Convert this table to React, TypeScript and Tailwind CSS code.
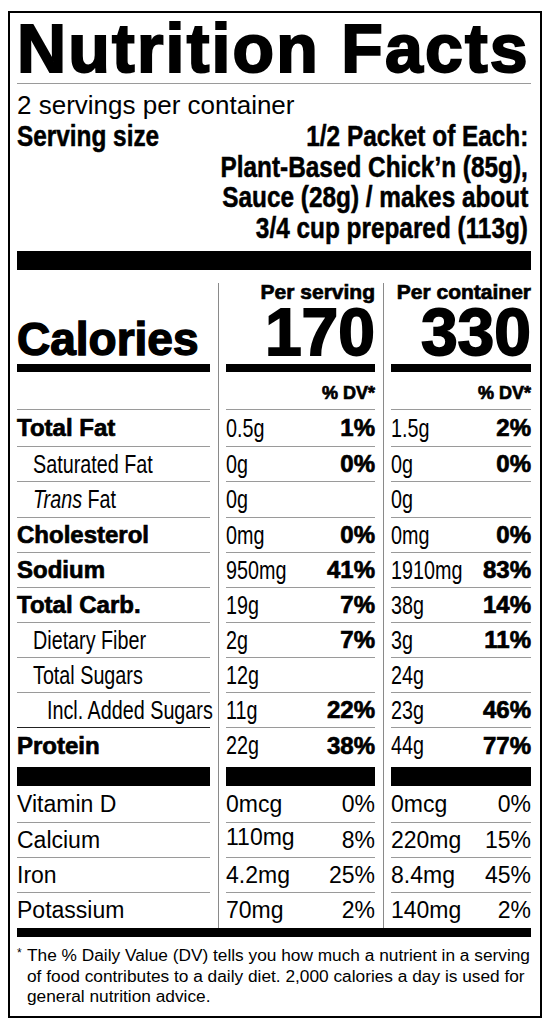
import React from 'react';

const sans = "font-['Liberation_Sans',Arial,sans-serif]";
const heavy = "font-['Liberation_Sans',Arial,sans-serif] font-bold [-webkit-text-stroke:0.7px_#000]";
const boldSans = "font-['Liberation_Sans',Arial,sans-serif] font-bold [-webkit-text-stroke:0.5px_#000]";

// no condensed face installed, so squeeze the regular one horizontally
const N: React.FC<{ children: React.ReactNode; right?: boolean; wide?: boolean; className?: string }> = ({
  children,
  right,
  wide,
  className = '',
}) => (
  <span
    className={`inline-block whitespace-nowrap ${wide ? 'scale-x-[0.84]' : 'scale-x-[0.79]'} ${
      right ? 'origin-right' : 'origin-left'
    } ${className}`}
  >
    {children}
  </span>
);

interface ColsProps {
  a: React.ReactNode;
  b: React.ReactNode;
  c: React.ReactNode;
  aCls?: string;
  bCls?: string;
  cCls?: string;
}

// three columns with the grey dividers running between them
const Cols: React.FC<ColsProps> = ({ a, b, c, aCls = '', bCls = '', cCls = '' }) => (
  <div className="flex">
    <div className={`w-[193px] shrink-0 ${aCls}`}>{a}</div>
    <div className="ml-[8px] flex border-l border-[#8a8a8a] pl-[7px]">
      <div className={`w-[149px] ${bCls}`}>{b}</div>
    </div>
    <div className="ml-[8px] flex border-l border-[#8a8a8a] pl-[7px]">
      <div className={`w-[140px] ${cCls}`}>{c}</div>
    </div>
  </div>
);

interface Nutrient {
  label: React.ReactNode;
  kind: 'bold' | 'sub' | 'subsub';
  s: string;
  sd?: string;
  c: string;
  cd?: string;
  h: string;
  lineIndent?: boolean;
  darkLine?: boolean;
  noLine?: boolean;
}

const nutrients: Nutrient[] = [
  { label: 'Total Fat', kind: 'bold', s: '0.5g', sd: '1%', c: '1.5g', cd: '2%', h: 'h-[37px]' },
  { label: 'Saturated Fat', kind: 'sub', s: '0g', sd: '0%', c: '0g', cd: '0%', h: 'h-[35px]' },
  { label: <><i>Trans</i> Fat</>, kind: 'sub', s: '0g', c: '0g', h: 'h-[36px]' },
  { label: 'Cholesterol', kind: 'bold', s: '0mg', sd: '0%', c: '0mg', cd: '0%', h: 'h-[35px]' },
  { label: 'Sodium', kind: 'bold', s: '950mg', sd: '41%', c: '1910mg', cd: '83%', h: 'h-[35px]' },
  { label: 'Total Carb.', kind: 'bold', s: '19g', sd: '7%', c: '38g', cd: '14%', h: 'h-[35px]' },
  { label: 'Dietary Fiber', kind: 'sub', s: '2g', sd: '7%', c: '3g', cd: '11%', h: 'h-[35px]' },
  { label: 'Total Sugars', kind: 'sub', s: '12g', c: '24g', h: 'h-[35px]', lineIndent: true },
  { label: 'Incl. Added Sugars', kind: 'subsub', s: '11g', sd: '22%', c: '23g', cd: '46%', h: 'h-[35px]', darkLine: true },
  { label: 'Protein', kind: 'bold', s: '22g', sd: '38%', c: '44g', cd: '77%', h: 'h-[35px]', noLine: true },
];

const vitamins = [
  { label: 'Vitamin D', s: '0mcg', sd: '0%', c: '0mcg', cd: '0%', h: 'h-[37px]' },
  { label: 'Calcium', s: '110mg', sd: '8%', c: '220mg', cd: '15%', h: 'h-[35px]', lift: true },
  { label: 'Iron', s: '4.2mg', sd: '25%', c: '8.4mg', cd: '45%', h: 'h-[35px]' },
  { label: 'Potassium', s: '70mg', sd: '2%', c: '140mg', cd: '2%', h: 'h-[35px]', noLine: true },
];

const line = 'border-b border-[#9a9a9a]';

const App: React.FC = () => {
  return (
    <div className="min-h-[1024px] w-[551px] bg-white pt-[11px] text-black">
      <div className="ml-[8px] w-[534px] border-2 border-black pb-[9px] pl-[7px] pr-[9px]">
        <h1 className={`${heavy} whitespace-nowrap border-b border-[#9a9a9a] text-[68px] leading-[70px] tracking-[2.2px] [-webkit-text-stroke:2px_#000]`}>
          Nutrition Facts
        </h1>

        <p className={`${sans} pt-[7px] text-[26px] leading-[28px]`}>2 servings per container</p>

        <div className={`${boldSans} mt-[2px] flex text-[29px] leading-[30.5px]`}>
          <div className="w-0 whitespace-nowrap">
            <N wide>Serving size</N>
          </div>
          <div className="ml-auto flex flex-col items-end pr-[3px]">
            <N wide right>1/2 Packet of Each:</N>
            <N wide right>Plant-Based Chick’n (85g),</N>
            <N wide right>Sauce (28g) / makes about</N>
            <N wide right>3/4 cup prepared (113g)</N>
          </div>
        </div>

        <div className="mt-[8px] h-[19px] bg-black" />

        <div className="pt-[13px]">
          <Cols
            aCls="flex flex-col justify-end"
            a={
              <>
                <div className={`${heavy} text-[46px] leading-[42px] [-webkit-text-stroke:1.4px_#000]`}>Calories</div>
                <div className="mt-[4px] h-[8px] bg-black" />
              </>
            }
            b={
              <>
                <div className={`${heavy} text-right text-[21px] leading-[18px]`}>Per serving</div>
                <div className={`${heavy} mt-[3px] text-right text-[66px] leading-[56px] [-webkit-text-stroke:1.8px_#000]`}>170</div>
                <div className="mt-[4px] h-[8px] bg-black" />
              </>
            }
            c={
              <>
                <div className={`${heavy} text-right text-[21px] leading-[18px]`}>Per container</div>
                <div className={`${heavy} mt-[3px] text-right text-[66px] leading-[56px] [-webkit-text-stroke:1.8px_#000]`}>330</div>
                <div className="mt-[4px] h-[8px] bg-black" />
              </>
            }
          />
          <Cols
            aCls={`h-[38px] ${line}`}
            bCls={`h-[38px] ${line}`}
            cCls={`h-[38px] ${line}`}
            a={null}
            b={<div className={`${heavy} pt-[11px] text-right text-[18px] leading-[20px]`}>% DV*</div>}
            c={<div className={`${heavy} pt-[11px] text-right text-[18px] leading-[20px]`}>% DV*</div>}
          />

          {nutrients.map((n, i) => {
            const ln = n.noLine ? '' : line;
            const aLine = n.noLine ? '' : n.darkLine ? 'border-b border-[#222]' : line;
            const label =
              n.kind === 'bold' ? (
                <span className={`${heavy} whitespace-nowrap text-[24px] leading-none`}>{n.label}</span>
              ) : (
                <N className={`${sans} text-[25px] leading-none ${n.kind === 'sub' ? 'ml-[16px]' : 'ml-[30px]'} ${n.lineIndent ? '-translate-x-[31px]' : ''}`}>
                  {n.label}
                </N>
              );
            return (
              <Cols
                key={i}
                aCls={`${n.h} ${aLine} ${n.lineIndent ? 'pl-[31px]' : ''} flex items-center`}
                bCls={`${n.h} ${ln} flex items-center justify-between`}
                cCls={`${n.h} ${ln} flex items-center justify-between`}
                a={
                  n.lineIndent ? (
                    <div className={`flex h-full w-full items-center ${line} -mb-px`}>{label}</div>
                  ) : (
                    label
                  )
                }
                b={
                  <>
                    <N className={`${sans} text-[25px] leading-none`}>{n.s}</N>
                    {n.sd && <span className={`${heavy} text-[24px] leading-none`}>{n.sd}</span>}
                  </>
                }
                c={
                  <>
                    <N className={`${sans} text-[25px] leading-none`}>{n.c}</N>
                    {n.cd && <span className={`${heavy} text-[24px] leading-none`}>{n.cd}</span>}
                  </>
                }
              />
            );
          })}

          <Cols
            aCls="pt-[4px]"
            bCls="pt-[4px]"
            cCls="pt-[4px]"
            a={<div className="h-[19px] bg-black" />}
            b={<div className="h-[19px] bg-black" />}
            c={<div className="h-[19px] bg-black" />}
          />

          {vitamins.map((v) => {
            const ln = v.noLine ? '' : line;
            return (
              <Cols
                key={v.label}
                aCls={`${v.h} ${ln} flex items-center`}
                bCls={`${v.h} ${ln} flex items-center justify-between`}
                cCls={`${v.h} ${ln} flex items-center justify-between`}
                a={<span className={`${sans} text-[23px] leading-none`}>{v.label}</span>}
                b={
                  <>
                    <span className={`${sans} text-[23px] leading-none ${v.lift ? '-translate-y-[3px]' : ''}`}>{v.s}</span>
                    <span className={`${sans} text-[23px] leading-none`}>{v.sd}</span>
                  </>
                }
                c={
                  <>
                    <span className={`${sans} text-[23px] leading-none`}>{v.c}</span>
                    <span className={`${sans} text-[23px] leading-none`}>{v.cd}</span>
                  </>
                }
              />
            );
          })}
        </div>

        <div className="h-[9px] bg-black" />

        <div className={`${sans} mt-[8px] text-[17.3px] leading-[20.5px]`}>
          <div className="whitespace-nowrap">
            <span className="inline-block w-[10px] align-top text-[12px] leading-[16px]">*</span>The % Daily Value (DV) tells you how much a nutrient in a serving
          </div>
          <div className="pl-[10px]">of food contributes to a daily diet. 2,000 calories a day is used for</div>
          <div className="pl-[10px]">general nutrition advice.</div>
        </div>
      </div>
    </div>
  );
};

export default App;
